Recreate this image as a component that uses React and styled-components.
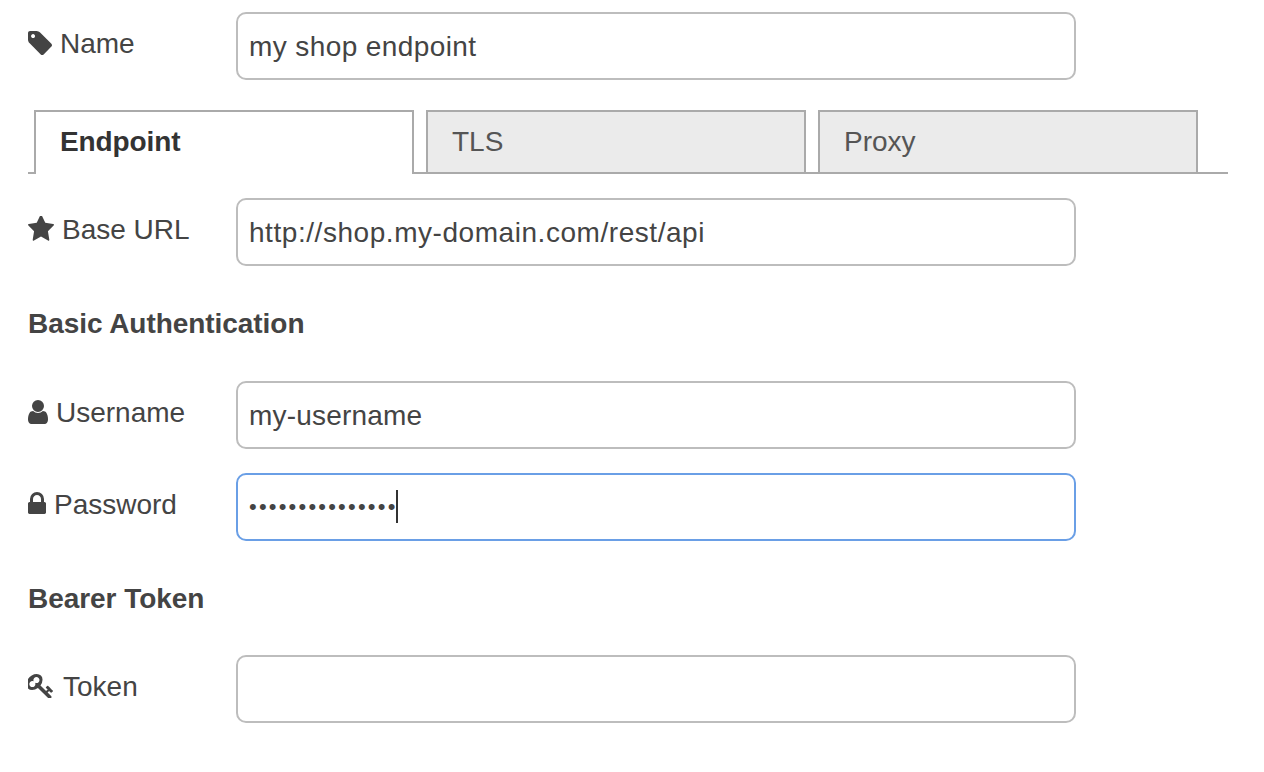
import React from 'react'
import styled, { createGlobalStyle } from 'styled-components'

const GlobalStyle = createGlobalStyle`
  html, body {
    margin: 0;
    background: #fff;
  }
  body {
    font-family: "Liberation Sans", Arial, sans-serif;
    font-size: 28px;
    color: #444;
  }
`;

const SPage = styled.form`
  width: 1200px;
  padding: 12px 0 0 28px;
`;

const SRow = styled.div`
  display: flex;
  align-items: flex-start;
  margin-top: ${props => props.$top || 0}px;
`;

const SLabel = styled.label`
  display: flex;
  align-items: center;
  gap: ${props => props.$gap || 8}px;
  width: 208px;
  height: 42px;
  margin-top: 11px;
  line-height: 42px;
  flex-shrink: 0;
`;

const SIcon = styled.svg`
  display: block;
  fill: #444;
  flex-shrink: 0;
  margin-bottom: ${props => props.$lift}px;
`;

const SFieldWrap = styled.div`
  position: relative;
  width: 840px;
`;

const SInput = styled.input`
  display: block;
  box-sizing: border-box;
  width: 840px;
  height: 68px;
  padding: 2px 11px 0;
  border: 2px solid ${props => props.$focused ? '#6a9fe6' : '#bdbdbd'};
  border-radius: 10px;
  background: #fff;
  outline: none;
  font-family: inherit;
  font-size: 28px;
  letter-spacing: ${props => props.$spacing || 0}px;
  color: #444;
`;

const SPasswordInput = styled(SInput)`
  font-size: 22px;
  letter-spacing: 2.2px;
  padding: 0 11px;
`;

const SCaret = styled.span`
  position: absolute;
  left: 160px;
  top: 17px;
  width: 2px;
  height: 33px;
  background: #333;
`;

const STabBar = styled.div`
  display: flex;
  gap: 12px;
  height: 62px;
  margin-top: 30px;
  padding-left: 6px;
  border-bottom: 2px solid #aaa;
`;

const STab = styled.div`
  box-sizing: border-box;
  width: 380px;
  height: ${props => props.$active ? 64 : 62}px;
  padding-left: 24px;
  border: 2px solid #aaa;
  border-bottom: none;
  background: ${props => props.$active ? '#fff' : '#ebebeb'};
  color: ${props => props.$active ? '#333' : '#555'};
  font-weight: ${props => props.$active ? 'bold' : 'normal'};
  letter-spacing: ${props => props.$active ? '-0.1px' : '0'};
  line-height: 60px;
`;

const SHeading = styled.div`
  height: 40px;
  margin-top: ${props => props.$top}px;
  margin-bottom: ${props => props.$bottom}px;
  font-weight: bold;
  letter-spacing: -0.05px;
  line-height: 40px;
`;

const icons = {
  tag: {
    box: '128 128 1515 1515', w: 24, h: 24, lift: 2,
    d: 'M576 448q0-53-37.5-90.5t-90.5-37.5-90.5 37.5-37.5 90.5 37.5 90.5 90.5 37.5 90.5-37.5 37.5-90.5zm1067 576q0 53-37 90l-491 492q-39 37-91 37-53 0-90-37l-715-716q-38-37-64.5-101t-26.5-117v-416q0-52 38-90t90-38h416q53 0 117 26.5t102 64.5l715 714q37 39 37 91z',
  },
  star: {
    box: '64 110 1664 1590', w: 26, h: 26, lift: 2,
    d: 'M1728 647q0 22-26 48l-363 354 86 500q1 7 1 20 0 21-10.5 35.5t-30.5 14.5q-19 0-40-12l-449-236-449 236q-22 12-40 12-21 0-31.5-14.5t-10.5-35.5q0-6 2-20l86-500-364-354q-25-27-25-48 0-37 56-46l502-73 225-455q19-41 49-41t49 41l225 455 502 73q56 9 56 46z',
  },
  user: {
    box: '256 128 1280 1536', w: 20, h: 24, lift: 2,
    d: 'M1536 1399q0 109-62.5 187t-150.5 78h-854q-88 0-150.5-78t-62.5-187q0-85 8.5-160.5t31.5-152 58.5-131 94-89 134.5-34.5q131 128 313 128t313-128q76 0 134.5 34.5t94 89 58.5 131 31.5 152 8.5 160.5zm-256-887q0 159-112.5 271.5t-271.5 112.5-271.5-112.5-112.5-271.5 112.5-271.5 271.5-112.5 271.5 112.5 112.5 271.5z',
  },
  lock: {
    box: '320 128 1152 1408', w: 18, h: 22, lift: 4,
    d: 'M640 768h512v-192q0-106-75-181t-181-75-181 75-75 181v192zm832 96v576q0 40-28 68t-68 28h-960q-40 0-68-28t-28-68v-576q0-40 28-68t68-28h32v-192q0-184 132-316t316-132 316 132 132 316v192h32q40 0 68 28t28 68z',
  },
  key: {
    box: '109 128 1574 1536', w: 25, h: 24, lift: 2,
    d: 'M832 512q0-80-56-136t-136-56-136 56-56 136q0 42 19 83-41-19-83-19-80 0-136 56t-56 136 56 136 136 56 136-56 56-136q0-42-19-83 41 19 83 19 80 0 136-56t56-136zm851 704q0 17-49 66t-66 49q-9 0-28.5-16t-36.5-33-38.5-40-24.5-26l-96 96 220 220q28 28 28 68 0 42-39 81t-81 39q-40 0-68-28l-671-671q-176 131-365 131-163 0-265.5-102.5t-102.5-265.5q0-160 95-313t248-248 313-95q163 0 265.5 102.5t102.5 265.5q0 189-131 365l355 355 96-96q-3-3-26-24.5t-40-38.5-33-36.5-16-28.5q0-17 49-66t66-49q13 0 23 10 6 6 46 44.5t82 79.5 86.5 86 73 78 28.5 41z',
  },
};

function Icon({ name }) {
  const icon = icons[name];
  return (
    <SIcon viewBox={icon.box} width={icon.w} height={icon.h} $lift={icon.lift} preserveAspectRatio="none">
      <path d={icon.d} />
    </SIcon>
  )
}

function App() {
  return (
    <>
      <GlobalStyle />
      <SPage>
        <SRow>
          <SLabel><Icon name="tag" /> Name</SLabel>
          <SInput type="text" defaultValue="my shop endpoint" $spacing={0.4} />
        </SRow>
        <STabBar>
          <STab $active>Endpoint</STab>
          <STab>TLS</STab>
          <STab>Proxy</STab>
        </STabBar>
        <SRow $top={24}>
          <SLabel><Icon name="star" /> Base URL</SLabel>
          <SInput type="text" defaultValue="http://shop.my-domain.com/rest/api" $spacing={0.55} />
        </SRow>
        <SHeading $top={38} $bottom={37}>Basic Authentication</SHeading>
        <SRow>
          <SLabel><Icon name="user" /> Username</SLabel>
          <SInput type="text" defaultValue="my-username" $spacing={0.2} />
        </SRow>
        <SRow $top={24}>
          <SLabel><Icon name="lock" /> Password</SLabel>
          <SFieldWrap>
            <SPasswordInput type="password" defaultValue="abcdefghijklmno" $focused />
            <SCaret />
          </SFieldWrap>
        </SRow>
        <SHeading $top={38} $bottom={36}>Bearer Token</SHeading>
        <SRow>
          <SLabel $gap={10}><Icon name="key" /> Token</SLabel>
          <SInput type="text" />
        </SRow>
      </SPage>
    </>
  )
}

export default App
